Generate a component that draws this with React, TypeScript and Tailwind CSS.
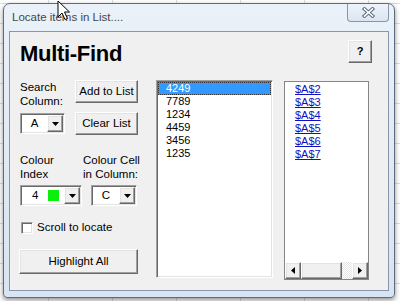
import React from "react";

const raised =
  "border border-t-white border-l-white border-r-[#696969] border-b-[#696969] shadow-[inset_-1px_-1px_0_#a0a0a0,inset_1px_1px_0_#e3e3e3] bg-[#f0f0f0]";
const sunken =
  "border border-t-[#a0a0a0] border-l-[#a0a0a0] border-r-white border-b-white shadow-[inset_1px_1px_0_#696969,inset_-1px_-1px_0_#e3e3e3] bg-white p-[1px]";

function DropBtn() {
  return (
    <div className={`w-[16px] h-full flex items-center justify-center ${raised}`}>
      <svg width="7" height="4" viewBox="0 0 7 4">
        <path d="M0 0h7L3.5 4z" fill="#000" />
      </svg>
    </div>
  );
}

function Arrow({ dir }: { dir: "l" | "r" }) {
  return (
    <div className={`w-[16px] h-full flex items-center justify-center ${raised}`}>
      <svg width="4" height="7" viewBox="0 0 4 7">
        {dir === "l" ? <path d="M4 0v7L0 3.5z" fill="#000" /> : <path d="M0 0v7L4 3.5z" fill="#000" />}
      </svg>
    </div>
  );
}

export default function App() {
  const nums = ["4249", "7789", "1234", "4459", "3456", "1235"];
  const refs = ["$A$2", "$A$3", "$A$4", "$A$5", "$A$6", "$A$7"];
  return (
    <div className="relative w-[400px] h-[301px] overflow-hidden bg-white bg-[linear-gradient(to_right,#dadcdd_1px,transparent_1px),linear-gradient(to_bottom,#dadcdd_1px,transparent_1px)] bg-[length:64px_20px] bg-[position:48px_3px] [font-family:'Liberation_Sans',Arial,sans-serif] text-black">
      <div className="pl-[3px] pt-[3px]">
        <div className="w-[392px] h-[295px] border border-[#5f6b7b] rounded-t-[7px] rounded-b-[4px] bg-[linear-gradient(to_bottom,#eaf1f9,#d8e4f1)] shadow-[0_2px_5px_rgba(0,0,0,0.45)] flex flex-col">
          {/* title bar */}
          <div className="h-[27px] flex items-start shrink-0">
            <span className="ml-[8px] mt-[6px] text-[11.5px] leading-[14px] text-[#474747]">
              Locate items in List....
            </span>
            <div className="ml-auto mr-[5px] w-[42px] h-[18px] border border-t-0 border-[#8796aa] rounded-b-[4px] bg-[linear-gradient(to_bottom,#eef3fa,#dbe5f2)] flex items-center justify-center">
              <svg width="13" height="11" viewBox="0 0 13 11">
                <path d="M2.5 2L10.5 9M10.5 2L2.5 9" stroke="#5f6b7c" strokeWidth="3.6" strokeLinecap="square" />
                <path d="M2.5 2L10.5 9M10.5 2L2.5 9" stroke="#ffffff" strokeWidth="1.6" strokeLinecap="square" />
              </svg>
            </div>
          </div>
          {/* client */}
          <div className="mx-[5px] h-[260px] border border-[#8796aa] bg-[#f0f0f0] pl-[9px] pt-[8px] pr-[16px] text-[11.5px] leading-[13.5px]">
            <div className="flex justify-between h-[23px]">
              <span className="ml-[1px] mt-[2px] text-[22px] leading-[23px] font-bold tracking-[-0.3px]">Multi-Find</span>
              <div className={`w-[24px] h-[23px] flex items-center justify-center font-bold text-[11px] ${raised}`}>?</div>
            </div>
            <div className="mt-[17px] flex items-start">
              {/* left column */}
              <div className="w-[119px] flex flex-col">
                <div className="flex h-[32px]">
                  <div className="w-[56px] pl-[1px] pt-[1px]">
                    Search
                    <br />
                    Column:
                  </div>
                  <div className={`w-[63px] h-[23px] flex items-center justify-center ${raised}`}>Add to List</div>
                </div>
                <div className="flex h-[23px]">
                  <div className={`ml-[1px] mt-[1px] w-[45px] h-[21px] flex ${sunken}`}>
                    <div className="flex-1 flex items-center justify-center">A</div>
                    <DropBtn />
                  </div>
                  <div className={`ml-[10px] w-[63px] h-[23px] flex items-center justify-center ${raised}`}>Clear List</div>
                </div>
                <div className="mt-[17px] flex h-[33px]">
                  <div className="w-[64px] pl-[1px] pt-[2px]">
                    Colour
                    <br />
                    Index
                  </div>
                  <div className="w-[55px] pt-[2px] text-right whitespace-nowrap">
                    Colour Cell
                    <br />
                    in Column:
                  </div>
                </div>
                <div className="flex h-[21px]">
                  <div className={`ml-[1px] w-[62px] h-[21px] flex ${sunken}`}>
                    <div className="flex-1 flex items-center pl-[10px]">
                      <span>4</span>
                      <span className="ml-[10px] w-[11px] h-[11px] bg-[#0af00a]" />
                    </div>
                    <DropBtn />
                  </div>
                  <div className={`ml-[9px] w-[46px] h-[21px] flex ${sunken}`}>
                    <div className="flex-1 flex items-center justify-center">C</div>
                    <DropBtn />
                  </div>
                </div>
                <div className="mt-[16px] flex items-center h-[12px]">
                  <div className="ml-[2px] w-[12px] h-[12px] border border-t-[#a0a0a0] border-l-[#a0a0a0] border-r-white border-b-white shadow-[inset_1px_1px_0_#696969,inset_-1px_-1px_0_#e3e3e3] bg-white" />
                  <span className="ml-[4px]">Scroll to locate</span>
                </div>
                <div className={`mt-[15px] w-[119px] h-[25px] flex items-center justify-center ${raised}`}>Highlight All</div>
              </div>
              {/* listbox 1 */}
              <div className={`ml-[18px] w-[117px] h-[198px] ${sunken} text-[11px] leading-[13px]`}>
                {nums.map((n, i) =>
                  i === 0 ? (
                    <div key={n} className="h-[13px] bg-[#3399ff] text-white pl-[8px] outline-1 outline-dotted outline-[#333] -outline-offset-1">
                      {n}
                    </div>
                  ) : (
                    <div key={n} className="h-[13px] pl-[8px]">
                      {n}
                    </div>
                  )
                )}
              </div>
              {/* listbox 2 */}
              <div className="ml-[11px] mt-[1px] w-[85px] h-[199px] border border-[#868686] bg-white flex flex-col text-[11px] leading-[13px]">
                <div className="flex-1 pt-[1px] pl-[10px]">
                  {refs.map((r) => (
                    <div key={r} className="h-[13px] text-[#1010c0] underline">
                      {r}
                    </div>
                  ))}
                </div>
                <div className="h-[17px] flex">
                  <Arrow dir="l" />
                  <div className={`w-[41px] h-full ${raised}`} />
                  <div className="flex-1 bg-[repeating-conic-gradient(#ffffff_0_25%,#e4e4e4_0_50%)] bg-[length:2px_2px]" />
                  <Arrow dir="r" />
                </div>
              </div>
            </div>
          </div>
        </div>
      </div>
      {/* mouse cursor */}
      <svg className="absolute left-[57px] top-[0px]" width="14" height="21" viewBox="0 0 14 21">
        <path d="M1 1V17L5 13L8 19.5L10.5 18.5L7.5 12H12.5Z" fill="#fff" stroke="#000" strokeWidth="1" strokeLinejoin="miter" />
      </svg>
    </div>
  );
}
